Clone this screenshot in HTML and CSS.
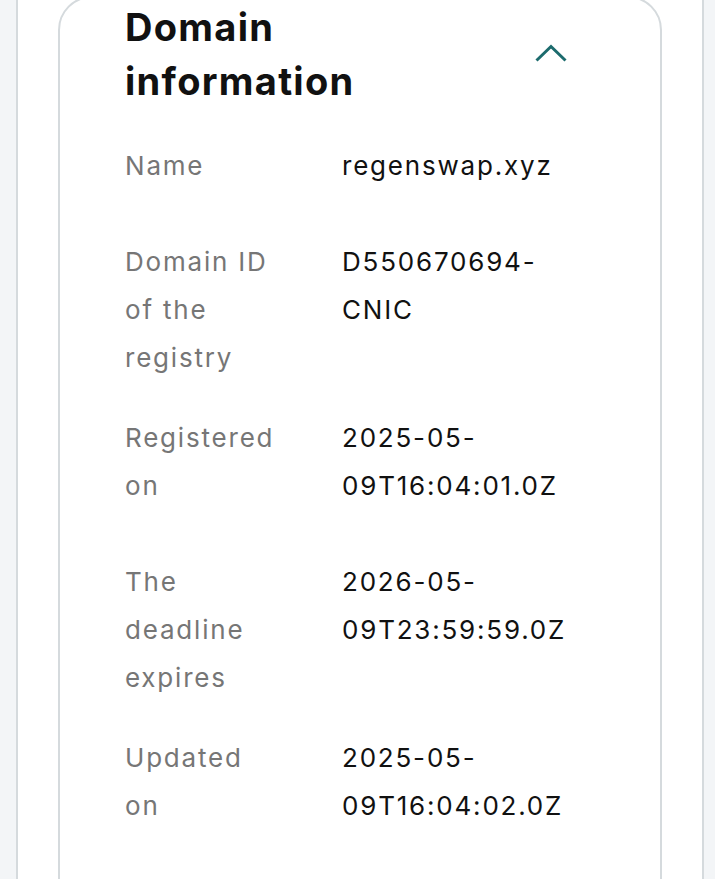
FILE: index.html
```html
<!DOCTYPE html>
<html lang="en">
<head>
<meta charset="utf-8">
<title>Domain information</title>
<link rel="stylesheet" href="styles.css">
</head>
<body>
<div class="page">
  <section class="card">
    <div class="card-header">
      <h2 class="card-title">Domain information</h2>
      <button class="toggle" aria-label="Collapse">
        <svg width="34" height="20" viewBox="0 0 34 20" aria-hidden="true"><path d="M2.5 16.5 L17 2.5 L31.5 16.5" fill="none" stroke="#1c6b6d" stroke-width="3"/></svg>
      </button>
    </div>
    <dl class="info">
      <div class="row"><dt>Name</dt><dd>regenswap.xyz</dd></div>
      <div class="row"><dt>Domain ID of the registry</dt><dd>D550670694-CNIC</dd></div>
      <div class="row"><dt>Registered on</dt><dd>2025-05-09T16:04:01.0Z</dd></div>
      <div class="row"><dt>The deadline expires</dt><dd>2026-05-09T23:59:59.0Z</dd></div>
      <div class="row"><dt>Updated on</dt><dd>2025-05-09T16:04:02.0Z</dd></div>
    </dl>
  </section>
</div>
</body>
</html>
```

FILE: styles.css
```css
html, body {
  margin: 0;
  padding: 0;
}
body {
  background: #f3f5f7;
  font-family: Inter, "Noto Sans", sans-serif;
  padding: 0 11px 0 16px;
  overflow: hidden;
}
.page {
  background: #ffffff;
  border-left: 2px solid #d5dadd;
  border-right: 2px solid #d5dadd;
  padding: 0 40px;
  min-height: 100vh;
}
.card {
  border: 2px solid #d5dadd;
  border-top-left-radius: 34px;
  border-top-right-radius: 34px;
  margin-top: -4px;
  padding: 2px 65px 40px 65px;
  min-height: 900px;
}
.card-header {
  display: flex;
  align-items: center;
  justify-content: space-between;
}
.card-title {
  margin: 0;
  max-width: 300px;
  font-size: 38px;
  line-height: 54px;
  font-weight: 700;
  color: #111111;
  letter-spacing: 1.3px;
}
.toggle {
  background: none;
  border: 0;
  padding: 0;
  margin-right: 27px;
  display: flex;
}
.info {
  margin: 34px 0 0 0;
}
.row {
  display: grid;
  grid-template-columns: 155px 1fr;
  column-gap: 62px;
  padding-bottom: 32px;
  font-size: 26px;
  line-height: 48px;
  letter-spacing: 1.8px;
}
.row dt {
  color: #767676;
}
.row dd {
  margin: 0;
  padding-bottom: 16px;
  color: #111111;
}
```
